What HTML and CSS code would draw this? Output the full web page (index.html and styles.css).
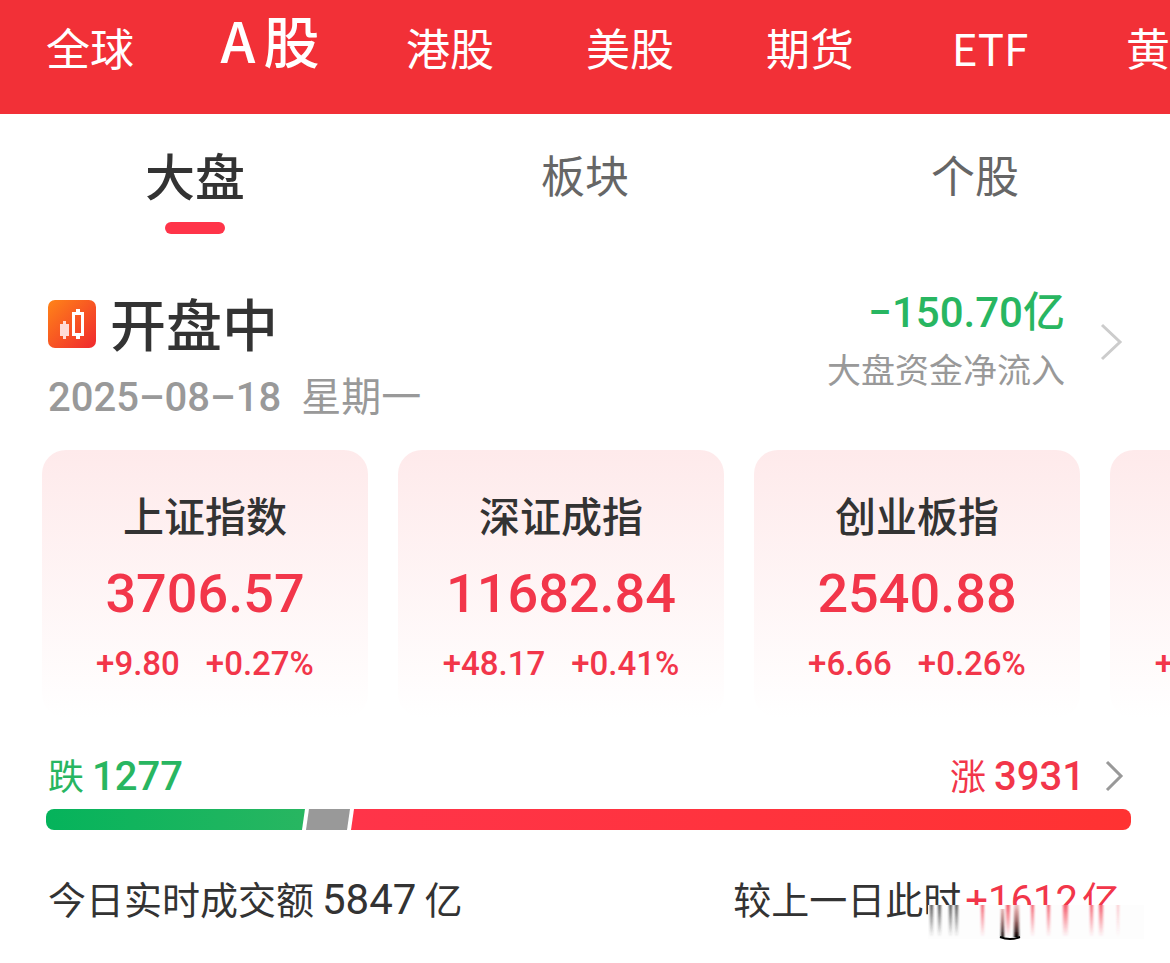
FILE: index.html
```html
<!DOCTYPE html>
<html lang="zh-CN">
<head>
    <meta charset="UTF-8">
    <meta name="viewport" content="width=device-width, initial-scale=1.0">
    <title>A股 大盘</title>
    <link rel="stylesheet" href="styles.css">
</head>
<body>

<header>
    <nav class="markets">
        <a href="#">全球</a>
        <a href="#" class="active"><span>A</span><span>股</span></a>
        <a href="#">港股</a>
        <a href="#">美股</a>
        <a href="#">期货</a>
        <a href="#">ETF</a>
        <a href="#">黄金</a>
    </nav>
</header>

<main>
    <div class="tabs">
        <button type="button" class="active">大盘</button>
        <button type="button">板块</button>
        <button type="button">个股</button>
    </div>

    <section class="status">
        <div class="status-info">
            <h1>
                <svg class="logo" viewBox="0 0 48 48" aria-hidden="true">
                    <defs>
                        <linearGradient id="logoFill" x1="0" y1="0" x2="1" y2="1">
                            <stop offset="0" stop-color="#ff8418"/>
                            <stop offset="1" stop-color="#f0282e"/>
                        </linearGradient>
                    </defs>
                    <rect width="48" height="48" rx="7" fill="url(#logoFill)"/>
                    <path d="M15 21h3v3h3v12h-3v3h-3v-3h-3V24h3z" fill="#ffdcd6"/>
                    <path d="M28 9h4v3h4v24h-4v3h-4v-3h-4V12h4zM27 15v18h6V15z" fill="#fff" fill-rule="evenodd"/>
                </svg>
                开盘中
            </h1>
            <p class="date"><span class="num">2025–08–18</span> <span>星期一</span></p>
        </div>
        <a href="#" class="flow">
            <div class="flow-text">
                <strong><span class="num">−150.70</span>亿</strong>
                <span>大盘资金净流入</span>
            </div>
            <svg class="arrow" viewBox="0 0 24 40" aria-label="详情">
                <path d="M3 3l18 17L3 37" fill="none" stroke="#ccc" stroke-width="3"/>
            </svg>
        </a>
    </section>

    <section class="indexes">
        <article class="card">
            <h2>上证指数</h2>
            <p class="value">3706.57</p>
            <p class="change"><span>+9.80</span><span>+0.27%</span></p>
        </article>
        <article class="card">
            <h2>深证成指</h2>
            <p class="value">11682.84</p>
            <p class="change"><span>+48.17</span><span>+0.41%</span></p>
        </article>
        <article class="card">
            <h2>创业板指</h2>
            <p class="value">2540.88</p>
            <p class="change"><span>+6.66</span><span>+0.26%</span></p>
        </article>
        <article class="card">
            <h2>北证50</h2>
            <p class="value">1576.63</p>
            <p class="change"><span>+98.35</span><span>+6.65%</span></p>
        </article>
    </section>

    <section class="breadth">
        <div class="breadth-head">
            <p class="down">跌 <span class="num">1277</span></p>
            <a href="#" class="up">涨 <span class="num">3931</span>
                <svg class="arrow" viewBox="0 0 24 40" aria-label="详情">
                    <path d="M6 6l14 14L6 34" fill="none" stroke="#999" stroke-width="3"/>
                </svg>
            </a>
        </div>
        <div class="bar">
            <div class="bar-down" style="flex-grow: 1277"></div>
            <div class="bar-flat" style="flex-grow: 217"></div>
            <div class="bar-up" style="flex-grow: 3846"></div>
        </div>
    </section>

    <section class="turnover">
        <p>今日实时成交额<span class="num">5847</span>亿</p>
        <p class="compare">较上一日此时<span class="rise"><span class="num">+1612</span>亿</span>
            <svg class="smear" viewBox="0 0 220 36" aria-hidden="true">
                <defs>
                    <linearGradient id="fadeGrey" x1="0" y1="0" x2="0" y2="1">
                        <stop offset="0" stop-color="#333" stop-opacity="0.85"/>
                        <stop offset="1" stop-color="#333" stop-opacity="0"/>
                    </linearGradient>
                    <linearGradient id="fadeRed" x1="0" y1="0" x2="0" y2="1">
                        <stop offset="0" stop-color="#f2364a" stop-opacity="0.8"/>
                        <stop offset="1" stop-color="#f2364a" stop-opacity="0"/>
                    </linearGradient>
                    <linearGradient id="fadeBlack" x1="0" y1="0" x2="0" y2="1">
                        <stop offset="0" stop-color="#c33" stop-opacity="0.3"/>
                        <stop offset="1" stop-color="#000"/>
                    </linearGradient>
                    <filter id="soft" x="-5%" y="0" width="110%" height="100%">
                        <feGaussianBlur stdDeviation="1 0"/>
                    </filter>
                </defs>
                <rect width="216" height="34" fill="#fdfdfd"/>
                <g filter="url(#soft)">
                    <path d="M2 0h3v32h-3zM10 0h3v32h-3zM21 0h3v32h-3zM27 0h3v32h-3z" fill="url(#fadeGrey)"/>
                    <path d="M53 0h3v32h-3zM78 0h4v32h-4zM103 0h3v32h-3zM119 0h3v32h-3zM135 0h5v32h-5zM162 0h3v32h-3zM171 0h4v32h-4z" fill="url(#fadeRed)"/>
                    <path d="M189 0h2v32h-2z" fill="url(#fadeRed)" opacity="0.4"/>
                    <path d="M73 4h3v28h-3zM86 0h5v32h-5z" fill="url(#fadeBlack)"/>
                </g>
                <path d="M72 32q10 4 20 0" fill="none" stroke="#000" stroke-width="2"/>
            </svg>
        </p>
    </section>
</main>

</body>
</html>
```
FILE: styles.css
```css
* {
    box-sizing: border-box;
}
body {
    font-family: 'Noto Sans CJK SC', sans-serif;
    margin: 0;
    background-color: #fff;
    color: #333;
    overflow-x: hidden;
}
h1, h2, p {
    margin: 0;
    font-weight: 400;
}
h1, h2 {
    font-weight: 500;
}
a {
    color: inherit;
    text-decoration: none;
}
.num, .value, .change {
    font-family: Roboto, 'Noto Sans CJK SC', sans-serif;
    font-weight: 500;
}
.arrow {
    width: 24px;
    height: 40px;
}

/* top market navigation */
header {
    background-color: #f23037;
    color: #fff;
    overflow: hidden;
}
.markets {
    display: flex;
    align-items: center;
    height: 114px;
    padding-bottom: 20px;
}
.markets a {
    flex: 0 0 180px;
    font-size: 44px;
    line-height: 64px;
    text-align: center;
}
.markets .active {
    display: flex;
    justify-content: center;
    gap: 8px;
    padding-bottom: 16px;
    font-size: 56px;
    font-weight: 500;
}

.tabs {
    display: grid;
    grid-template-columns: repeat(3, 1fr);
}
.tabs button {
    display: flex;
    flex-direction: column;
    align-items: center;
    height: 120px;
    padding: 26px 0 0;
    border: 0;
    background: none;
    font-family: inherit;
    font-size: 44px;
    line-height: 68px;
    color: #666;
    cursor: pointer;
}
.tabs .active {
    font-size: 50px;
    font-weight: 500;
    color: #333;
}
.tabs .active::after {
    content: "";
    width: 60px;
    height: 12px;
    margin-top: 14px;
    border-radius: 6px;
    background-color: #ff3449;
}

.status {
    display: flex;
    justify-content: space-between;
    padding: 48px 47px 20px 48px;
}
.status h1 {
    display: flex;
    align-items: flex-start;
    gap: 14px;
    font-size: 56px;
    line-height: 80px;
}
.logo {
    width: 48px;
    height: 48px;
    margin-top: 18px;
}
.date {
    display: flex;
    align-items: baseline;
    gap: 20px;
    font-size: 40px;
    line-height: 64px;
    color: #999;
}
.flow {
    display: flex;
    align-items: center;
    gap: 34px;
    height: 120px;
}
.flow-text {
    display: flex;
    flex-direction: column;
    align-items: flex-end;
    padding-bottom: 6px;
    font-size: 34px;
    line-height: 56px;
    color: #999;
}
.flow-text strong {
    font-size: 42px;
    font-weight: 500;
    color: #28b661;
}

/* index cards, last one runs off the right edge */
.indexes {
    display: flex;
    gap: 30px;
    padding-left: 42px;
    overflow: hidden;
}
.card {
    flex: 0 0 326px;
    padding: 32px 0;
    border-radius: 24px;
    background: linear-gradient(#feeaeb, #fff);
    text-align: center;
    color: #f2364a;
}
.card h2 {
    font-size: 41px;
    line-height: 64px;
    color: #333;
}
.value {
    font-size: 54px;
    line-height: 96px;
}
.change {
    display: flex;
    justify-content: center;
    gap: 26px;
    font-size: 33px;
    line-height: 44px;
}

.breadth {
    padding: 28px 39px 0 46px;
}
.breadth-head {
    display: flex;
    justify-content: space-between;
    padding-left: 2px;
    font-size: 36px;
    line-height: 56px;
}
.breadth-head .num {
    font-size: 40px;
}
.down, .up {
    display: flex;
    align-items: baseline;
    gap: 8px;
}
.down {
    color: #28b661;
}
.up {
    color: #f2364a;
}
.up .arrow {
    align-self: center;
    margin: 0 6px 0 8px;
}
.bar {
    display: flex;
    gap: 1px;
    height: 21px;
    margin-top: 4px;
    border-radius: 8px;
    overflow: hidden;
}
.bar div {
    flex-basis: 0;
}
.bar-down {
    background: linear-gradient(90deg, #05b35b, #28b661);
    clip-path: polygon(0 0, 100% 0, calc(100% - 3px) 100%, 0 100%);
}
.bar-flat {
    background-color: #999;
    clip-path: polygon(3px 0, 100% 0, calc(100% - 3px) 100%, 0 100%);
}
.bar-up {
    background: linear-gradient(90deg, #ff3449, #ff3232);
    clip-path: polygon(3px 0, 100% 0, 100% 100%, 0 100%);
}

.turnover {
    display: flex;
    justify-content: space-between;
    padding: 36px 50px 32px 48px;
    font-size: 38px;
    line-height: 64px;
}
.turnover .num {
    margin: 0 8px;
    font-size: 42px;
    font-weight: 400;
}
.turnover .rise .num {
    margin: 0 4px;
    font-size: 40px;
}
.rise {
    color: #f2364a;
}
.compare {
    position: relative;
}
.smear {
    position: absolute;
    right: -28px;
    bottom: -8px;
    width: 220px;
    height: 36px;
}
```
